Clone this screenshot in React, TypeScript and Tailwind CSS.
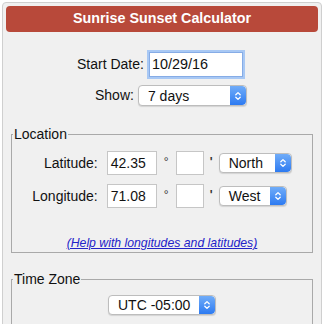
import React from "react";

const font = { fontFamily: '"Liberation Sans", Arial, Helvetica, sans-serif' };

function Stepper() {
  return (
    <span className="flex h-full w-[16px] items-center justify-center rounded-r-[4px] bg-gradient-to-b from-[#70acf8] to-[#2c7af1]">
      <svg width="8" height="12" viewBox="0 0 8 12" fill="none">
        <path d="M1.8 4.8 L4 2.6 L6.2 4.8" stroke="white" strokeWidth="1.3" strokeLinecap="round" strokeLinejoin="round" />
        <path d="M1.8 7.2 L4 9.4 L6.2 7.2" stroke="white" strokeWidth="1.3" strokeLinecap="round" strokeLinejoin="round" />
      </svg>
    </span>
  );
}

function FakeSelect({ value, className }: { value: string; className: string }) {
  return (
    <div
      className={`flex items-center overflow-hidden rounded-[4px] border border-[#bdbdbd] bg-white shadow-[0_1px_1px_rgba(0,0,0,0.12)] ${className}`}
    >
      <span className="flex-1 pl-[9px] text-[14px] leading-none text-[#111]">{value}</span>
      <Stepper />
    </div>
  );
}

function CoordRow({ value, dir, selectWidth }: { value: string; dir: string; selectWidth: string }) {
  return (
    <div className="flex h-[24px] items-center">
      <div className="flex h-[24px] w-[50px] items-center border border-[#c6c6c6] bg-white pl-[3px] text-[14px] text-[#111]">
        {value}
      </div>
      <span className="w-[19px] self-start pt-[2px] text-center text-[12px] text-[#333]">°</span>
      <div className="h-[24px] w-[28px] border border-[#c6c6c6] bg-white" />
      <span className="w-[15px] self-start pt-[2px] text-center text-[12px] font-bold text-[#333]">'</span>
      <FakeSelect value={dir} className={`h-[20px] ${selectWidth}`} />
    </div>
  );
}

export default function App() {
  return (
    <div className="min-h-[324px] bg-white pt-[2px]" style={font}>
      <div className="ml-[2px] w-[320px] rounded-[4px] border border-[#cfcfcf] bg-[#f0f0f0] p-[3px] pb-[30px]">
        {/* Header */}
        <div className="flex h-[26px] items-center justify-center rounded-[4px] bg-[#b8493a]">
          <h1 className="text-[14.3px] font-bold text-white">Sunrise Sunset Calculator</h1>
        </div>

        {/* Start date / show */}
        <div className="mt-[20px] flex items-center pl-[71px]">
          <span className="text-[14px] text-[#111]">Start Date:</span>
          <div className="ml-[5px] flex h-[25px] w-[94px] items-center border border-[#86ace6] bg-white pl-[2px] text-[14.4px] text-[#111] shadow-[0_0_0_2px_#a8c8f4]">
            10/29/16
          </div>
        </div>
        <div className="mt-[8px] flex items-center pl-[89px]">
          <span className="text-[14px] text-[#111]">Show:</span>
          <FakeSelect value="7 days" className="ml-[4px] h-[21px] w-[109px]" />
        </div>

        {/* Location */}
        <fieldset className="mx-[5px] mt-[20px] border border-[#a9a9a9] pb-0">
          <legend className="ml-[1px] px-[1px] text-[14px] leading-[16px] text-[#111]">Location</legend>
          <div className="mt-[9px] flex justify-center">
            <div className="grid grid-cols-[auto_auto] items-center gap-x-[9px] gap-y-[9px]">
              <span className="text-right text-[14px] text-[#111]">Latitude:</span>
              <CoordRow value="42.35" dir="North" selectWidth="w-[73px]" />
              <span className="text-right text-[14px] text-[#111]">Longitude:</span>
              <CoordRow value="71.08" dir="West" selectWidth="w-[68px]" />
            </div>
          </div>
          <div className="mt-[25px] text-center leading-[17px]">
            <a href="#" className="text-[12.25px] italic text-[#2323c8] underline">
              (Help with longitudes and latitudes)
            </a>
          </div>
        </fieldset>

        {/* Time zone */}
        <fieldset className="mx-[5px] mt-[18px] border border-[#a9a9a9] pb-[14px]">
          <legend className="ml-[1px] px-[1px] text-[14px] leading-[16px] text-[#111]">Time Zone</legend>
          <div className="mt-[8px] flex justify-center">
            <FakeSelect value="UTC -05:00" className="h-[20px] w-[108px]" />
          </div>
        </fieldset>
      </div>
    </div>
  );
}
